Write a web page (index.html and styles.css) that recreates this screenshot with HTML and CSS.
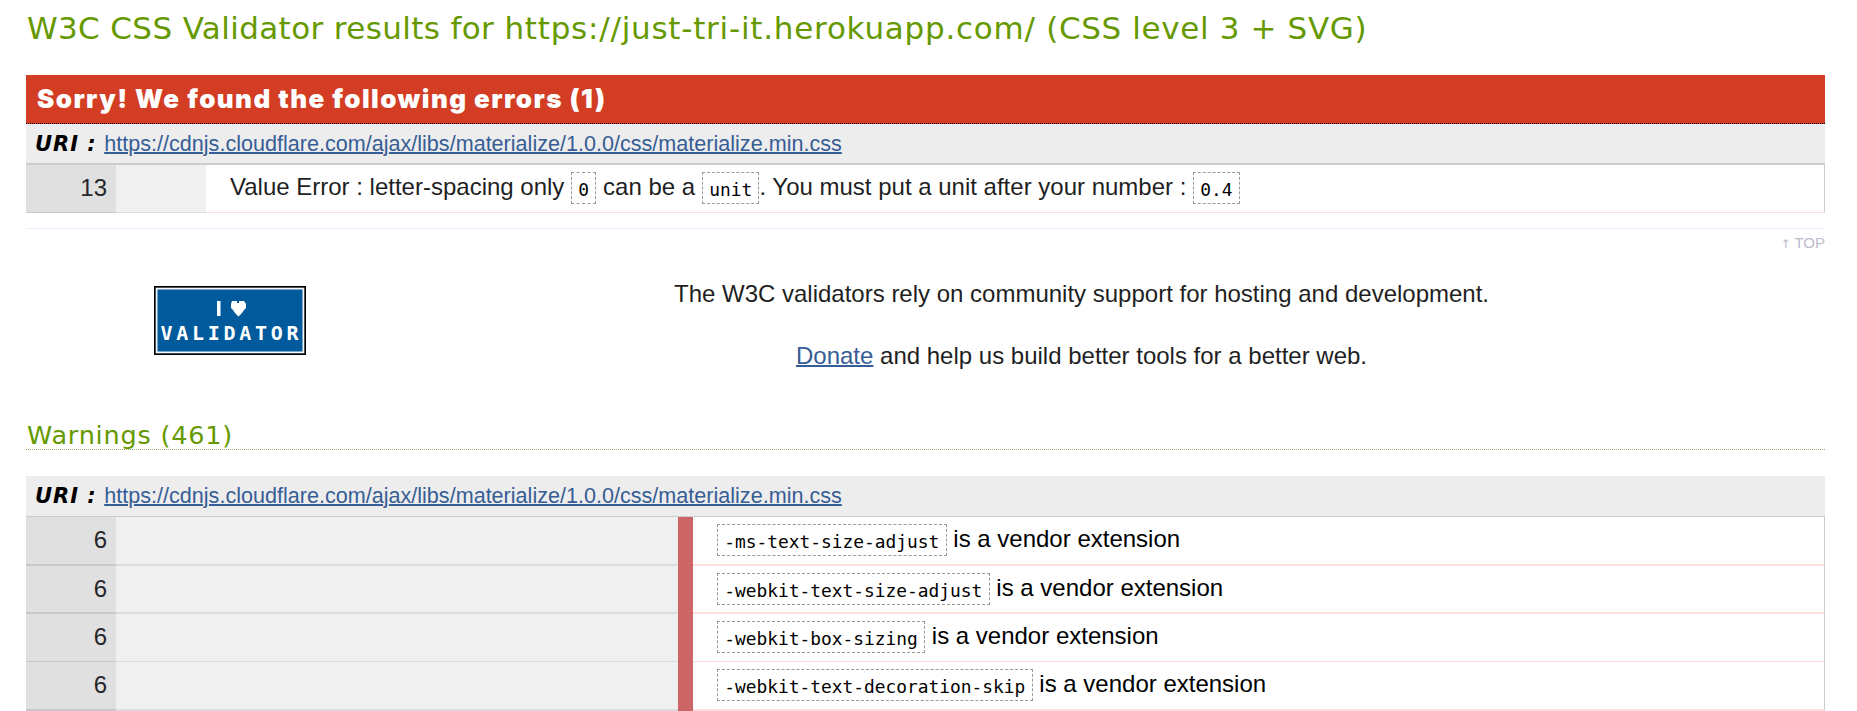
FILE: index.html
```html
<!DOCTYPE html>
<html lang="en">
<head>
<meta charset="utf-8">
<title>W3C CSS Validator results</title>
<link rel="stylesheet" href="styles.css">
</head>
<body>
<main class="results">
  <h2 class="title"><span class="title-lead">W3C CSS Validator results for </span><span class="title-uri">https://just-tri-it.herokuapp.com/</span> (CSS level 3 + SVG)</h2>

  <section class="errors">
    <h3 class="invalid">Sorry! We found the following errors (1)</h3>
    <h4 class="uri">URI : <a href="#">https://cdnjs.cloudflare.com/ajax/libs/materialize/1.0.0/css/materialize.min.css</a></h4>
    <div class="row error-row">
      <div class="line">13</div>
      <div class="context"></div>
      <div class="message">Value Error : letter-spacing only <code>0</code> can be a <code>unit</code>. You must put a unit after your number : <code>0.4</code></div>
    </div>
  </section>

  <div class="backtop"><a href="#"><span class="arrow">↑</span> TOP</a></div>

  <section class="support">
    <div class="badge-cell">
      <svg class="badge" width="152" height="69" viewBox="0 0 152 69">
        <rect width="152" height="69" fill="#000"/>
        <rect x="1.500" y="1.500" width="149" height="66" fill="#8fa3b3"/>
        <rect x="2" y="2" width="148" height="65" fill="#f4f6f8"/>
        <rect x="3.500" y="3.500" width="145" height="62" fill="#005a9c"/>
        <rect x="63" y="15" width="3.500" height="15" fill="#fff"/>
        <path d="M78 15h5v2h2v-2h5l2 3v4l-2 2-2 3-3.500 3.500-3.500-3.500-2-3-2-2v-4z" fill="#fff"/>
        <text class="badge-text" x="6.500" y="53.500" textLength="138" lengthAdjust="spacing">VALIDATOR</text>
      </svg>
    </div>
    <div class="support-text">
      <p>The W3C validators rely on community support for hosting and development.</p>
      <p><a href="#">Donate</a> and help us build better tools for a better web.</p>
    </div>
  </section>

  <section class="warnings">
    <h3 class="warnings-title">Warnings (461)</h3>
    <h4 class="uri">URI : <a href="#">https://cdnjs.cloudflare.com/ajax/libs/materialize/1.0.0/css/materialize.min.css</a></h4>
    <div class="row warning-row tall">
      <div class="line">6</div><div class="context"></div>
      <div class="message"><code>-ms-text-size-adjust</code> is a vendor extension</div>
    </div>
    <div class="row warning-row">
      <div class="line">6</div><div class="context"></div>
      <div class="message"><code>-webkit-text-size-adjust</code> is a vendor extension</div>
    </div>
    <div class="row warning-row thin">
      <div class="line">6</div><div class="context"></div>
      <div class="message"><code>-webkit-box-sizing</code> is a vendor extension</div>
    </div>
    <div class="row warning-row tall">
      <div class="line">6</div><div class="context"></div>
      <div class="message"><code>-webkit-text-decoration-skip</code> is a vendor extension</div>
    </div>
  </section>
</main>
</body>
</html>
```
FILE: styles.css
```css
* { box-sizing: border-box; }

body {
  margin: 0;
  background: #fff;
  color: #1f1f23;
  font: 24px "Liberation Sans", Arial, sans-serif;
  overflow: hidden;
}

h2, h3, h4, p { margin: 0; }

a { color: #365d95; }

.results { padding: 0 32px 0 26px; }

.title {
  height: 55px;
  margin-bottom: 20px;
  padding-left: 1px;
  color: #690;
  font: 31px/56px "DejaVu Sans", Verdana, sans-serif;
  letter-spacing: 0.63px;
  white-space: nowrap;
}

.title-lead { letter-spacing: 0.37px; }
.title-uri { letter-spacing: 0.76px; }

.invalid {
  height: 49px;
  padding-left: 11px;
  border-bottom: 1px dotted #000;
  background: #d23d24;
  color: #fff;
  font: 900 26px/48px Inter, "Arial Black", sans-serif;
  letter-spacing: 1.42px;
}

.uri {
  display: flex;
  align-items: baseline;
  height: 41px;
  padding-left: 9px;
  border-bottom: 2px solid #ccc;
  background: #ededed;
  color: #000;
  font: italic bold 21px/39px "DejaVu Sans", Verdana, sans-serif;
  letter-spacing: 1px;
  white-space: nowrap;
}

.uri a {
  margin-left: 7.5px;
  font: 21.58px/39px "Liberation Sans", Arial, sans-serif;
  letter-spacing: 0;
  text-decoration-thickness: 2px;
}

.row {
  display: grid;
  height: 48px;
  line-height: 44px;
  white-space: nowrap;
}

.error-row { grid-template-columns: 90px 90px 1fr; }
.warning-row { grid-template-columns: 90px 562px 1fr; }

.row > div { border: 0 solid; border-bottom-width: 2px; }
.error-row > div, .thin > div { border-bottom-width: 1px; }
.tall { height: 49px; }

.row > .line {
  padding-right: 9px;
  border-color: #c8c8c8;
  background: #e0e0e0;
  color: #26262a;
  line-height: 46px;
  text-align: right;
}

.row > .context {
  border-color: #ddd;
  background: #f0f0f0;
}

.row > .message {
  padding-left: 24px;
  border-right: 1px solid #ccc;
  border-bottom-color: #fdd;
}

.warning-row { color: #000; background: linear-gradient(#c66, #c66) 652px 0 / 15px 100% no-repeat; }
.warning-row > .message { margin-left: 15px; }

code {
  padding: 6px 6.3px 3px;
  border: 1px dashed #999;
  color: #000;
  font: 17.86px/1 "DejaVu Sans Mono", Consolas, monospace;
  vertical-align: -1px;
}

.backtop {
  height: 29px;
  margin-top: 15px;
  border-top: 1px solid #eef;
  font-size: 15px;
  line-height: 28px;
  text-align: right;
}

.backtop a { color: #bbc; text-decoration: none; }
.arrow { font-family: "DejaVu Sans", sans-serif; font-size: 12px; }

.support {
  display: grid;
  grid-template-columns: 312px 1fr;
  height: 166px;
}

.badge-cell { padding: 29px 0 0 128px; }
.badge { display: block; }

.badge-text {
  fill: #fff;
  font: bold 20px "DejaVu Sans Mono", monospace;
}

.support-text {
  display: flex;
  flex-direction: column;
  gap: 32px;
  padding-top: 22px;
  text-align: center;
}

.support-text p { line-height: 30px; }
.support-text a { text-decoration-thickness: 2px; }

.warnings-title {
  height: 27px;
  margin-bottom: 26px;
  padding-left: 1px;
  border-bottom: 1px dotted #9a7;
  color: #690;
  font: 25.5px/24px "DejaVu Sans", Verdana, sans-serif;
  letter-spacing: 0.8px;
}

.warnings .uri { border-bottom-width: 1px; }
```
